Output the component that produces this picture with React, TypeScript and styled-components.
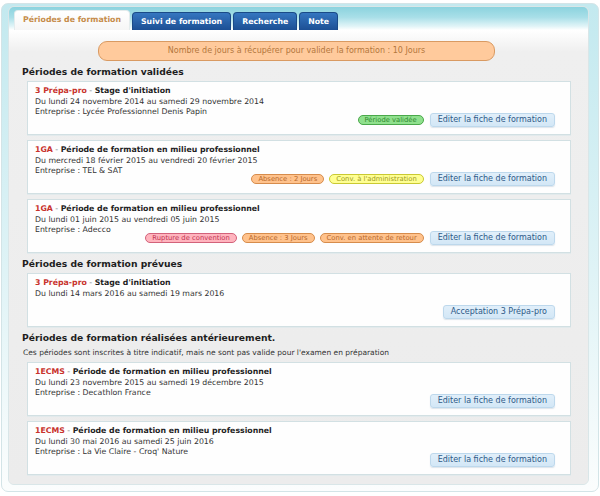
import styled, { createGlobalStyle } from "styled-components";

const GlobalStyle = createGlobalStyle`
  html, body {
    margin: 0;
    padding: 0;
    background: #ffffff;
  }
  body {
    font-family: "DejaVu Sans", Verdana, sans-serif;
    color: #333;
  }
`;

type Tone = "green" | "orange" | "yellow" | "pink";

const tones: Record<Tone, { bg: string; border: string; text: string }> = {
  green: { bg: "#8fe08d", border: "#4aa84a", text: "#2f8a2f" },
  orange: { bg: "#ffc28c", border: "#d68c4c", text: "#b8692b" },
  yellow: { bg: "#ffff92", border: "#c9c932", text: "#9c9a22" },
  pink: { bg: "#ffb4be", border: "#d2627a", text: "#c23452" },
};

const Frame = styled.div`
  margin: 3px 1px 3px 1px;
  padding: 2px 9px 7px 6px;
  border: 1px solid #d3e4e7;
  border-radius: 7px;
  background: linear-gradient(to bottom, #c3e9ef 0%, #dff3f6 55%, #fbfdfd 100%);
  height: 489px;
  box-sizing: border-box;
`;

const Window = styled.div`
  border-radius: 6px;
  overflow: hidden;
  border: 1px solid #d9e6e8;
  background: #ececec;
`;

const TabBar = styled.div`
  display: flex;
  align-items: flex-end;
  gap: 2px;
  height: 23px;
  padding-left: 5px;
  background: linear-gradient(to bottom, #8bd3de 0%, #a9dfe8 45%, #e3f5f8 85%, #ffffff 100%);
`;

const Tab = styled.div<{ active?: boolean }>`
  height: ${(p) => (p.active ? "19px" : "17px")};
  line-height: ${(p) => (p.active ? "18px" : "17px")};
  padding: 0 8px 0 8px;
  font-size: 7.8px;
  font-weight: bold;
  border-radius: 4px 4px 0 0;
  color: ${(p) => (p.active ? "#c68c4a" : "#ffffff")};
  background: ${(p) =>
    p.active
      ? "linear-gradient(to bottom, #ffffff, #f6f6f6)"
      : "linear-gradient(to bottom, #3576c0, #1c4f94)"};
  border: 1px solid ${(p) => (p.active ? "#e4eced" : "#1a4a88")};
  border-bottom: none;
`;

const Body = styled.div`
  padding: 11px 17px 9px 13px;
  background: linear-gradient(to bottom, #ffffff 0px, #efefef 22px, #ececec 100%);
`;

const Banner = styled.div`
  width: 397px;
  height: 20px;
  box-sizing: border-box;
  margin: 0 auto;
  border: 1px solid #d99a62;
  border-radius: 9px;
  background: #ffca9c;
  color: #b3773c;
  font-size: 8px;
  line-height: 18px;
  text-align: center;
`;

const SectionTitle = styled.h2`
  margin: 4px 0 3px 0;
  font-size: 9.2px;
  line-height: 13px;
  font-weight: bold;
  color: #1e1e1e;
`;

const Note = styled.p`
  margin: 2px 0 4px 1px;
  font-size: 7.5px;
  line-height: 11px;
  color: #333;
`;

const CardList = styled.div`
  display: flex;
  flex-direction: column;
  gap: 5px;
  padding-left: 5px;
`;

const Card = styled.div`
  display: grid;
  min-height: 54px;
  box-sizing: border-box;
  padding: 4px 15px 7px 7px;
  background: #fefefe;
  border: 1px solid #d2e0e3;
  box-shadow: 0 1px 0 #e2eaec;
`;

const CardText = styled.div`
  grid-area: 1 / 1;
  font-size: 7.8px;
  line-height: 10.5px;
  color: #333;
`;

const Title = styled.div`
  font-weight: bold;
  color: #1f1f1f;
`;

const Code = styled.span`
  color: #c8322c;
`;

const Dash = styled.span`
  color: #777;
  font-weight: normal;
`;

const Actions = styled.div`
  grid-area: 1 / 1;
  justify-self: end;
  align-self: end;
  display: flex;
  align-items: center;
  gap: 5px;
`;

const Badge = styled.span<{ tone: Tone }>`
  height: 10px;
  box-sizing: border-box;
  padding: 0 6px;
  border-radius: 5px;
  font-size: 6.8px;
  line-height: 8px;
  background: ${(p) => tones[p.tone].bg};
  border: 1px solid ${(p) => tones[p.tone].border};
  color: ${(p) => tones[p.tone].text};
`;

const Button = styled.span`
  height: 14px;
  box-sizing: border-box;
  padding: 0 7px;
  margin-left: 1px;
  border-radius: 3px;
  border: 1px solid #bdd8ec;
  background: linear-gradient(to bottom, #e1effa, #d3e7f6);
  color: #2e5a88;
  font-size: 8px;
  line-height: 12px;
  box-shadow: 0 1px 1px rgba(120, 150, 180, 0.25);
`;

type Period = {
  code: string;
  title: string;
  dates: string;
  company?: string;
  badges?: { label: string; tone: Tone }[];
  action: string;
};

const EDIT = "Editer la fiche de formation";

const validated: Period[] = [
  {
    code: "3 Prépa-pro",
    title: "Stage d'initiation",
    dates: "Du lundi 24 novembre 2014 au samedi 29 novembre 2014",
    company: "Lycée Professionnel Denis Papin",
    badges: [{ label: "Période validée", tone: "green" }],
    action: EDIT,
  },
  {
    code: "1GA",
    title: "Période de formation en milieu professionnel",
    dates: "Du mercredi 18 février 2015 au vendredi 20 février 2015",
    company: "TEL & SAT",
    badges: [
      { label: "Absence : 2 Jours", tone: "orange" },
      { label: "Conv. à l'administration", tone: "yellow" },
    ],
    action: EDIT,
  },
  {
    code: "1GA",
    title: "Période de formation en milieu professionnel",
    dates: "Du lundi 01 juin 2015 au vendredi 05 juin 2015",
    company: "Adecco",
    badges: [
      { label: "Rupture de convention", tone: "pink" },
      { label: "Absence : 3 Jours", tone: "orange" },
      { label: "Conv. en attente de retour", tone: "orange" },
    ],
    action: EDIT,
  },
];

const planned: Period[] = [
  {
    code: "3 Prépa-pro",
    title: "Stage d'initiation",
    dates: "Du lundi 14 mars 2016 au samedi 19 mars 2016",
    action: "Acceptation 3 Prépa-pro",
  },
];

const previous: Period[] = [
  {
    code: "1ECMS",
    title: "Période de formation en milieu professionnel",
    dates: "Du lundi 23 novembre 2015 au samedi 19 décembre 2015",
    company: "Decathlon France",
    action: EDIT,
  },
  {
    code: "1ECMS",
    title: "Période de formation en milieu professionnel",
    dates: "Du lundi 30 mai 2016 au samedi 25 juin 2016",
    company: "La Vie Claire - Croq' Nature",
    action: EDIT,
  },
];

function PeriodCard({ period }: { period: Period }) {
  return (
    <Card>
      <CardText>
        <Title>
          <Code>{period.code}</Code>
          <Dash> - </Dash>
          {period.title}
        </Title>
        <div>{period.dates}</div>
        {period.company && <div>Entreprise : {period.company}</div>}
      </CardText>
      <Actions>
        {period.badges?.map((b, i) => (
          <Badge key={i} tone={b.tone}>
            {b.label}
          </Badge>
        ))}
        <Button>{period.action}</Button>
      </Actions>
    </Card>
  );
}

const App = () => {
  return (
    <>
      <GlobalStyle />
      <Frame>
        <Window>
          <TabBar>
            <Tab active>Périodes de formation</Tab>
            <Tab>Suivi de formation</Tab>
            <Tab>Recherche</Tab>
            <Tab>Note</Tab>
          </TabBar>
          <Body>
            <Banner>
              Nombre de jours à récupérer pour valider la formation : 10 Jours
            </Banner>

            <SectionTitle>Périodes de formation validées</SectionTitle>
            <CardList>
              {validated.map((p, i) => (
                <PeriodCard key={i} period={p} />
              ))}
            </CardList>

            <SectionTitle>Périodes de formation prévues</SectionTitle>
            <CardList>
              {planned.map((p, i) => (
                <PeriodCard key={i} period={p} />
              ))}
            </CardList>

            <SectionTitle>Périodes de formation réalisées antérieurement.</SectionTitle>
            <Note>
              Ces périodes sont inscrites à titre indicatif, mais ne sont pas valide pour
              l'examen en préparation
            </Note>
            <CardList>
              {previous.map((p, i) => (
                <PeriodCard key={i} period={p} />
              ))}
            </CardList>
          </Body>
        </Window>
      </Frame>
    </>
  );
};

export default App;
